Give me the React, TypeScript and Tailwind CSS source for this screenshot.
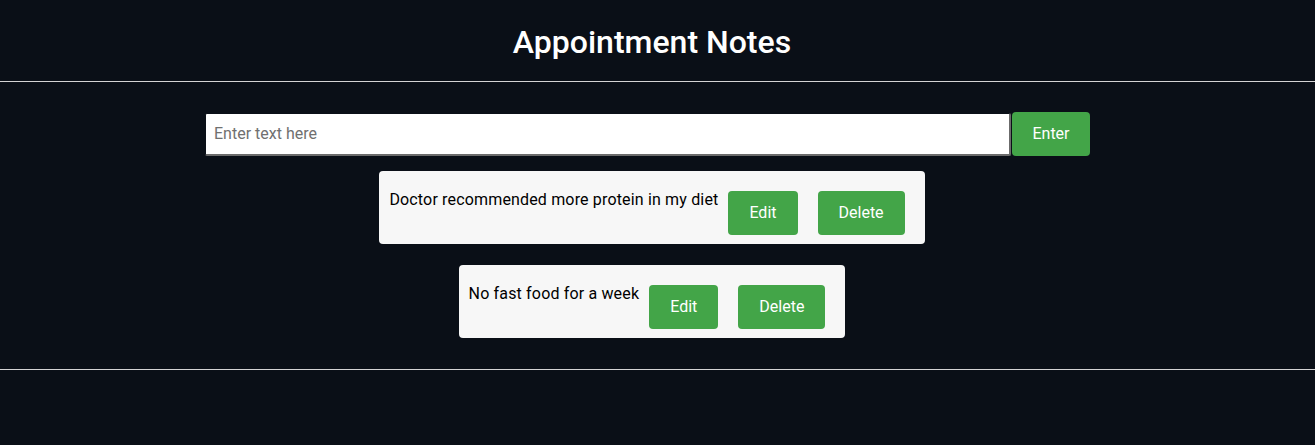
const notes = ['Doctor recommended more protein in my diet', 'No fast food for a week']

function NoteCard({ text }: { text: string }) {
    return (
        <div className="flex items-start bg-[#f7f7f7] rounded-[4px] px-[10px] pt-[10px] pb-[9px]">
            <p className="mt-[9px] text-[16px] leading-[20px] tracking-[0.16px] text-black">{text}</p>
            <button className="mt-[10px] ml-[10px] h-[44px] px-[21px] bg-[#43a548] text-white text-[16px] rounded-[4px]">
                Edit
            </button>
            <button className="mt-[10px] ml-[20px] mr-[10px] h-[44px] px-[21px] bg-[#43a548] text-white text-[16px] rounded-[4px]">
                Delete
            </button>
        </div>
    )
}

export default function App() {
    return (
        <div className="min-h-[445px] bg-[#0a0f17] font-['Roboto',sans-serif]">
            {/* Header */}
            <div className="h-[82px] border-b border-[#d4d4d4] flex justify-center pr-[11px]">
                <h1 className="mt-[22px] text-[32px] leading-[40px] font-medium text-white">Appointment Notes</h1>
            </div>

            {/* Main */}
            <div className="border-b border-[#d4d4d4] pt-[30px] pb-[31px] pr-[11px] flex flex-col items-center">
                <div className="flex items-center mr-[9px]">
                    <input
                        type="text"
                        placeholder="Enter text here"
                        className="w-[806px] h-[43px] bg-white rounded-[2px] border border-[#0a0f17] border-b-2 border-r-2 border-b-[#6b6b6b] border-r-[#6b6b6b] px-[8px] text-[16px] text-black placeholder:text-[#707070] outline-none"
                    />
                    <button className="ml-[1px] h-[44px] w-[78px] bg-[#43a548] text-white text-[16px] rounded-[4px]">
                        Enter
                    </button>
                </div>

                <div className="mt-[15px] flex flex-col items-center gap-[21px]">
                    {notes.map((n) => (
                        <NoteCard key={n} text={n} />
                    ))}
                </div>
            </div>
        </div>
    )
}
